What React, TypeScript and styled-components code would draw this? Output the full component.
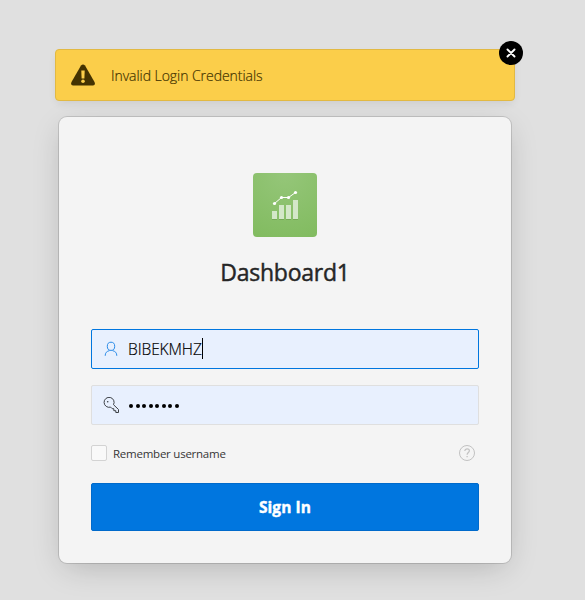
import React from 'react';
import styled, { createGlobalStyle } from 'styled-components';

const GlobalStyle = createGlobalStyle`
  * { box-sizing: border-box; }
  html { background: #e0e0e0; }
  body {
    margin: 0;
    overflow: hidden;
    background: #e0e0e0;
    font-family: "Segoe UI", "Open Sans", "Noto Sans", sans-serif;
    color: #262626;
  }
`;

const Page = styled.main`
  width: 570px;
  height: 600px;
  padding-top: 49px;
  display: flex;
  flex-direction: column;
  align-items: center;
  gap: 16px;
`;

const Alert = styled.div`
  position: relative;
  display: flex;
  align-items: center;
  width: 460px;
  height: 52px;
  flex: none;
  padding-left: 15px;
  gap: 16px;
  background: #fbce4a;
  border: 1px solid #e2b943;
  border-radius: 4px;
  box-shadow: 0 4px 10px -2px rgba(0, 0, 0, 0.09);
`;

const AlertText = styled.span`
  padding-top: 1px;
  font-size: 14px;
  font-weight: 300;
  line-height: 21px;
  letter-spacing: -0.05px;
  -webkit-text-stroke: 0.2px #443401;
  color: #443401;
`;

const CloseButton = styled.button`
  position: absolute;
  top: -9px;
  right: -9px;
  width: 24px;
  height: 24px;
  padding: 0;
  display: grid;
  place-items: center;
  border: 0;
  border-radius: 50%;
  background: #000;
`;

const Card = styled.form`
  display: flex;
  flex-direction: column;
  align-items: center;
  width: 452px;
  height: 446px;
  flex: none;
  padding: 56px 32px 32px;
  border-radius: 8px;
  background: #f4f4f4;
  box-shadow: 0 0 0 1px rgba(0, 0, 0, 0.13), 0 8px 32px -6px rgba(0, 0, 0, 0.22);
`;

const Logo = styled.div`
  width: 64px;
  height: 64px;
  flex: none;
  border-radius: 4px;
  background: radial-gradient(circle at 50% 0, #95c679, #81bb5f);
`;

const Title = styled.h1`
  margin: 20px 0 41px;
  font-size: 23px;
  font-weight: 400;
  line-height: 31px;
  letter-spacing: -0.24px;
  -webkit-text-stroke: 0.45px #262626;
`;

const Field = styled.label<{ $focused?: boolean }>`
  display: flex;
  align-items: center;
  width: 388px;
  height: 40px;
  flex: none;
  padding-left: 11px;
  gap: 9px;
  border: 1px solid ${(p) => (p.$focused ? '#0076df' : '#dfdfdf')};
  border-radius: 2px;
  background: #e8f0fe;
  & + & { margin-top: 16px; }
`;

const Username = styled.span`
  display: flex;
  align-items: center;
  font-size: 15.5px;
  font-weight: 300;
  letter-spacing: -0.07px;
  -webkit-text-stroke: 0.2px #000;
  color: #000;
`;

const Caret = styled.i`
  width: 1px;
  height: 21px;
  margin-top: -1px;
  background: #000;
`;

const Password = styled.span`
  display: flex;
  gap: 2.5px;
  padding-left: 1px;
  padding-top: 1px;
`;

const Dot = styled.i`
  width: 4px;
  height: 4px;
  border-radius: 50%;
  background: #000;
`;

const Options = styled.div`
  display: flex;
  align-items: center;
  width: 388px;
  height: 16px;
  margin: 20px 0 22px;
  padding-right: 3px;
`;

const Checkbox = styled.span`
  width: 16px;
  height: 16px;
  margin-right: 6px;
  border: 1px solid #d3d3d3;
  border-radius: 2px;
  background: #f9f9f9;
`;

const OptionLabel = styled.span`
  flex: 1;
  padding-top: 1px;
  font-size: 11.5px;
  line-height: 16px;
  letter-spacing: -0.24px;
  color: #363636;
`;

const SignIn = styled.button`
  width: 388px;
  height: 48px;
  flex: none;
  padding: 0;
  border: 1px solid #006acb;
  border-radius: 2px;
  background: #0076df;
  color: #fff;
  font: 700 15.5px "Segoe UI", "Open Sans", sans-serif;
  letter-spacing: 0.08px;
  -webkit-text-stroke: 0.4px #fff;
`;

const WarningIcon = () => (
  <svg width="24" height="22" viewBox="0 0 24 22">
    <path d="M10 1.5Q12-.7 14 1.5L23.5 18Q24.8 21 22 21.5H2Q-.8 21 .5 18Z" fill="#443301" />
    <path d="M10.3 6.5h3.4l-.3 8h-2.8z" fill="#fbce4a" />
    <circle cx="12" cy="17.2" r="1.8" fill="#fbce4a" />
  </svg>
);

const CloseIcon = () => (
  <svg width="10" height="10" viewBox="0 0 10 10">
    <path d="M1.5 1.5l7 7m0-7l-7 7" stroke="#fff" strokeWidth="1.9" strokeLinecap="round" />
  </svg>
);

const points = [[21.5, 30.5], [28.5, 24.5], [35.5, 24.5], [42.5, 19.5]];
const bars = [[19, 38], [26, 32], [33, 32], [40, 27]];

const ChartIcon = () => (
  <svg width="64" height="64" viewBox="0 0 64 64">
    {bars.map(([x, y]) => (
      <React.Fragment key={x}>
        <rect x={x} y={y} width="5" height={46 - y} fill="#d3e7c8" />
        <rect x={x} y="46" width="5" height="1" fill="#75aa56" />
      </React.Fragment>
    ))}
    <polyline points={points.map((p) => p.join(',')).join(' ')} fill="none" stroke="#fff" />
    {points.map(([x, y]) => <circle key={x} cx={x} cy={y} r="1.6" fill="#fff" />)}
  </svg>
);

const UserIcon = () => (
  <svg width="16" height="16" viewBox="0 0 16 16" fill="none" stroke="#2a8be8">
    <ellipse cx="8" cy="5.3" rx="3.7" ry="4.1" />
    <path d="M2.2 14.8c0-3.1 1.5-4.5 4.3-5.2m3 0c2.8.7 4.3 2.1 4.3 5.2" />
  </svg>
);

const KeyIcon = () => (
  <svg width="16" height="16" viewBox="0 0 16 16" fill="none" stroke="#3c4045">
    <path d="M10.5 7.7 15.5 12.5v3h-2.7v-1.8h-2v-2H9.2L7.6 10.1A5 5 0 1 1 10.5 7.7Z" strokeLinejoin="round" />
    <circle cx="4.7" cy="4.8" r=".8" fill="#3c4045" stroke="none" />
  </svg>
);

const HelpIcon = () => (
  <svg width="18" height="18" viewBox="0 0 18 18" fill="none" stroke="#c2c2c2">
    <circle cx="9" cy="9" r="7.5" />
    <path d="M6.8 7c0-3 4.6-2.8 4.6-.2 0 1.7-2.3 1.8-2.3 4" strokeWidth="1.2" />
    <path d="M9.1 12v1.3" strokeWidth="1.3" />
  </svg>
);

export default function App() {
  return (
    <>
      <GlobalStyle />
      <Page>
        <Alert role="alert">
          <WarningIcon />
          <AlertText>Invalid Login Credentials</AlertText>
          <CloseButton type="button" aria-label="Close"><CloseIcon /></CloseButton>
        </Alert>
        <Card>
          <Logo><ChartIcon /></Logo>
          <Title>Dashboard1</Title>
          <Field $focused>
            <UserIcon />
            <Username>BIBEKMHZ<Caret /></Username>
          </Field>
          <Field>
            <KeyIcon />
            <Password>{Array.from({ length: 8 }, (_, i) => <Dot key={i} />)}</Password>
          </Field>
          <Options>
            <Checkbox />
            <OptionLabel>Remember username</OptionLabel>
            <HelpIcon />
          </Options>
          <SignIn type="button">Sign In</SignIn>
        </Card>
      </Page>
    </>
  );
}
